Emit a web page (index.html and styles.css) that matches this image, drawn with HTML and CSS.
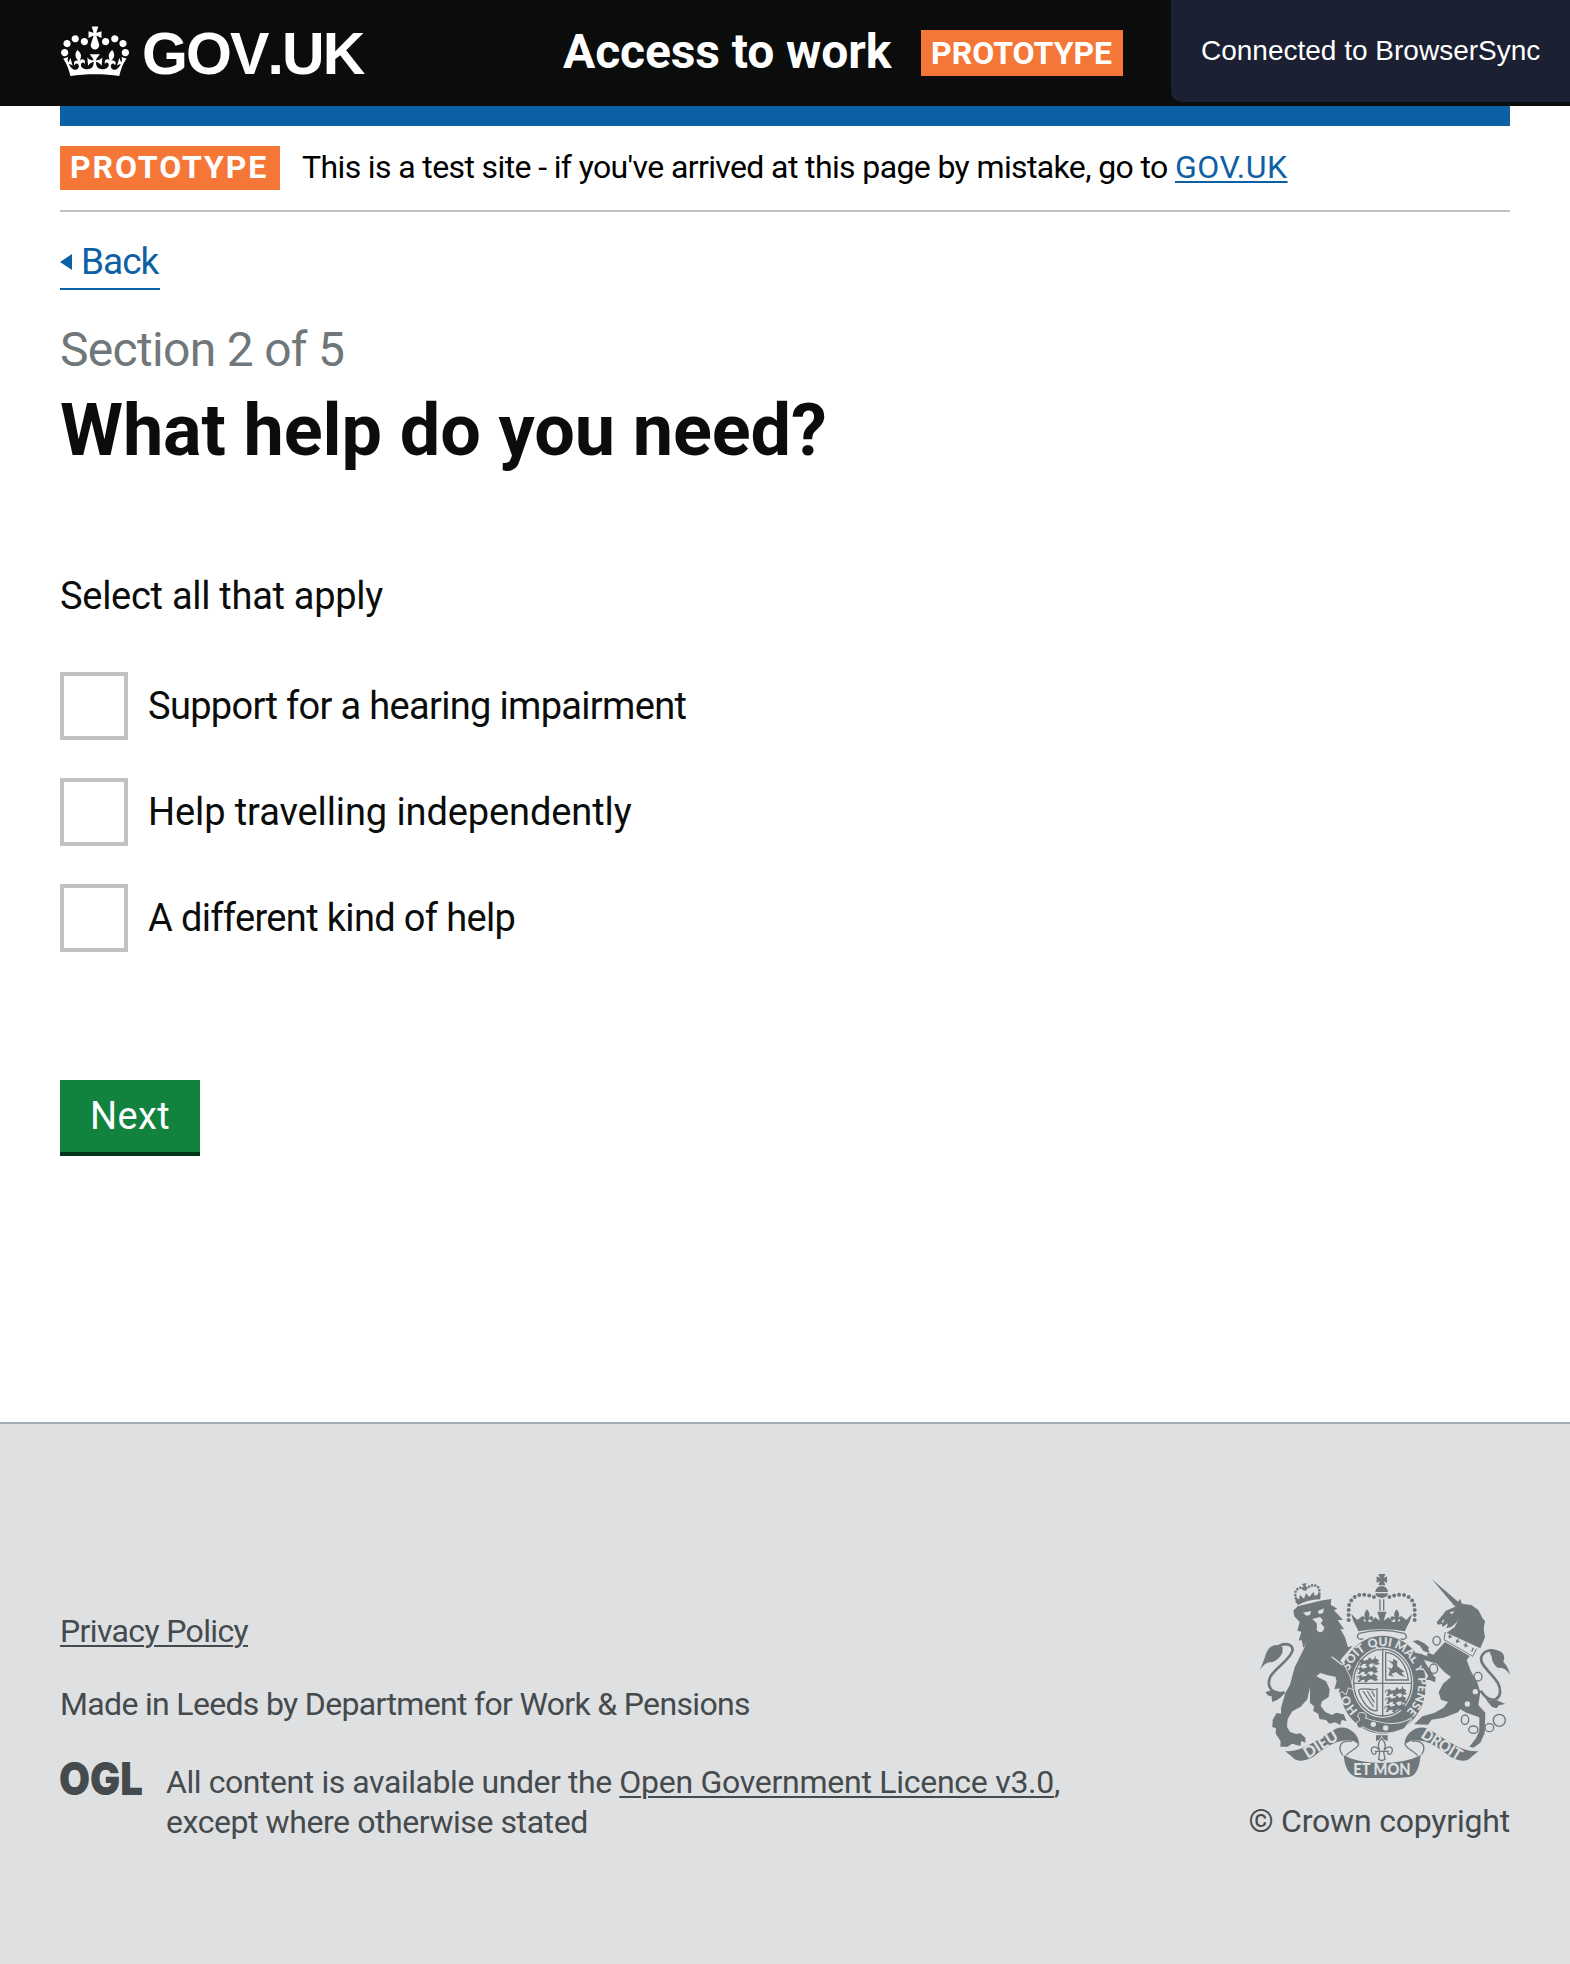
FILE: index.html
```html
<!DOCTYPE html>
<html lang="en">
<head>
<meta charset="utf-8">
<title>What help do you need?</title>
<link rel="stylesheet" href="styles.css">
</head>
<body>
<header class="header">
  <a class="logo" href="#">
    <svg class="logo-crown" viewBox="0 0 132 97" aria-hidden="true"><path fill="#fff" d="M25 30.2c3.5 1.5 7.7-.2 9.1-3.7 1.5-3.6-.2-7.8-3.9-9.2-3.6-1.4-7.6.3-9.1 3.9-1.4 3.5.3 7.5 3.9 9zM9 39.5c3.6 1.5 7.8-.2 9.2-3.7 1.5-3.6-.2-7.8-3.9-9.1-3.6-1.5-7.6.2-9.1 3.8-1.4 3.5.3 7.5 3.8 9zM4.4 57.2c3.5 1.5 7.7-.2 9.1-3.8 1.5-3.6-.2-7.7-3.9-9.1-3.5-1.5-7.6.3-9.1 3.8-1.4 3.5.3 7.6 3.9 9.1zm38.3-21.4c3.5 1.5 7.7-.2 9.1-3.8 1.5-3.6-.2-7.7-3.9-9.1-3.6-1.5-7.6.3-9.1 3.8-1.3 3.6.4 7.7 3.9 9.1zm64.4-5.6c-3.6 1.5-7.8-.2-9.1-3.7-1.5-3.6.2-7.8 3.8-9.2 3.6-1.4 7.7.3 9.2 3.9 1.3 3.5-.4 7.5-3.9 9zm15.9 9.3c-3.6 1.5-7.7-.2-9.1-3.7-1.5-3.6.2-7.8 3.7-9.1 3.6-1.5 7.7.2 9.2 3.8 1.5 3.5-.3 7.5-3.8 9zm4.7 17.7c-3.6 1.5-7.8-.2-9.2-3.8-1.5-3.6.2-7.7 3.9-9.1 3.6-1.5 7.7.3 9.2 3.8 1.3 3.5-.4 7.6-3.9 9.1zM89.3 35.8c-3.6 1.5-7.8-.2-9.2-3.8-1.4-3.6.2-7.7 3.9-9.1 3.6-1.5 7.7.3 9.2 3.8 1.4 3.6-.3 7.7-3.9 9.1zM69.7 17.7l8.9 4.7V9.3l-8.9 2.8c-.2-.3-.5-.6-.9-.9L72.4 0H59.6l3.5 11.2c-.3.3-.6.5-.9.9l-8.8-2.8v13.1l8.8-4.7c.3.3.6.7.9.9l-5 15.4v.1c-.2.8-.4 1.6-.4 2.4 0 4.1 3.1 7.5 7 8.1h.2c.3 0 .7.1 1 .1.4 0 .7 0 1-.1h.2c4-.6 7.1-4.1 7.1-8.1 0-.8-.1-1.7-.4-2.4V34l-5.1-15.4c.4-.2.7-.6 1-.9zM66 92.8c16.9 0 32.8 1.1 47.1 3.2 4-16.9 8.9-26.7 14-33.5l-9.6-3.4c1 4.9 1.1 7.2 0 10.2-1.5-1.4-3-4.3-4.2-8.7L108.6 76c2.8-2 5-3.2 7.5-3.3-4.4 9.4-10 11.9-13.6 11.2-4.3-.8-6.3-4.6-5.6-7.9 1-4.7 5.7-5.9 8-.5 4.3-8.7-3-11.4-7.6-8.8 7.1-7.2 7.9-13.5 2.1-21.1-8 6.1-8.1 12.3-4.5 20.8-4.7-5.4-12.1-2.5-9.5 6.2 3.4-5.2 7.9-2 7.2 3.1-.6 4.3-6.4 7.8-13.5 7.2-10.3-.9-10.9-8-11.2-13.8 2.5-.5 7.1 1.8 11 7.3L80.2 60c-4.1 4.4-8 5.3-12.3 5.4 1.4-4.4 8-11.6 8-11.6H55.5s6.4 7.2 7.9 11.6c-4.2-.1-8-1-12.3-5.4l1.4 16.4c3.9-5.5 8.5-7.7 10.9-7.3-.3 5.8-.9 12.8-11.1 13.8-7.2.6-12.9-2.9-13.5-7.2-.7-5 3.8-8.3 7.1-3.1 2.7-8.7-4.6-11.6-9.4-6.2 3.7-8.5 3.6-14.7-4.6-20.8-5.8 7.6-5 13.9 2.2 21.1-4.7-2.6-11.9.1-7.7 8.8 2.3-5.5 7.1-4.2 8.1.5.7 3.3-1.3 7.1-5.7 7.9-3.5.7-9-1.8-13.5-11.2 2.5.1 4.7 1.3 7.5 3.3l-4.7-15.4c-1.2 4.4-2.7 7.2-4.3 8.7-1.1-3-.9-5.3 0-10.2l-9.5 3.4c5 6.9 9.9 16.7 14 33.5 14.8-2.1 30.8-3.2 47.7-3.2z"/></svg>
    <span class="logo-text">GOV.UK</span>
  </a>
  <span class="service-name">Access to work</span>
  <strong class="tag">PROTOTYPE</strong>
</header>
<div class="sync-notice">Connected to BrowserSync</div>

<main class="container">
  <div class="phase-banner">
    <strong class="phase-tag">PROTOTYPE</strong>
    <span class="phase-text">This is a test site - if you've arrived at this page by mistake, go to <a class="phase-link" href="#">GOV.UK</a></span>
  </div>
  <a class="back" href="#"><span class="back-arrow"></span>Back</a>
  <div class="caption">Section 2 of 5</div>
  <h1 class="title">What help do you need?</h1>
  <form>
    <p class="hint">Select all that apply</p>
    <div class="options">
      <label class="option"><input class="box" type="checkbox"><span class="label label-hearing">Support for a hearing impairment</span></label>
      <label class="option"><input class="box" type="checkbox"><span class="label label-travel">Help travelling independently</span></label>
      <label class="option"><input class="box" type="checkbox"><span class="label label-other">A different kind of help</span></label>
    </div>
    <button class="next" type="button">Next</button>
  </form>
</main>

<footer class="footer">
  <div class="footer-main">
    <p class="privacy"><a href="#">Privacy Policy</a></p>
    <p class="made">Made in Leeds by Department for Work &amp; Pensions</p>
    <div class="licence">
      <svg class="ogl" viewBox="0 0 82 34" role="img" aria-label="Open Government Licence"><text x="-1" y="33" textLength="84" lengthAdjust="spacingAndGlyphs">OGL</text></svg>
      <p class="licence-text"><span class="licence-line">All content is available under the <a class="licence-link" href="#">Open Government Licence v3.0</a>,</span><br><span class="licence-rest">except where otherwise stated</span></p>
    </div>
  </div>
  <div class="copyright">
    <svg class="arms" viewBox="90 42 750 612" aria-hidden="true">
      <defs>
        <path id="garter" d="M458 482A107 110 0 0 1 351 373A107 115 0 0 1 565 373A107 110 0 0 1 458 482"/>
        <g id="fleur"><path d="M0-22C-10-10-9-3-3 6C-10-5-21-3-18 9C-15 14-10 12-10 8L-4 9L-5 18H5L4 9L10 8C10 12 15 14 18 9C21-3 10-5 3 6C9-3 10-10 0-22Z"/></g>
        <g id="lions"><path d="M0 3L8-3L13 3L24 0L31-7L36 0L48-4L58 2L54 8L61 13L49 16L40 11L30 13L25 20L17 19L20 12L10 13L4 20L-3 17L4 11Z"/><path class="thin" d="M5 3C-5-2-8 6-2 10M30 4L28-6M44 4L47-10"/></g>
      </defs>
      <!-- royal crown -->
      <path d="M445 42H466L461 54L471 49V69L461 63L466 76H445L450 63L440 69V49L450 54Z"/>
      <path d="M436 96C438 84 445 79 455 79S472 84 474 96ZM436 100H474C472 110 464 114 455 114S438 110 436 100Z"/>
      <path class="dots" d="M356 180V140C364 105 394 94 440 114M554 180V140C546 105 516 94 470 114"/>
      <path class="mid" d="M450 118V152M461 118V152"/>
      <path d="M364 162L382 180L394 170L404 185L424 186L435 172L450 182L442 155H469L461 182L476 172L487 186L507 185L517 170L529 180L546 162C541 188 530 198 525 214C485 206 425 206 385 214C380 198 369 188 364 162Z"/>
      <use href="#fleur" x="411" y="170"/><use href="#fleur" x="500" y="170"/>
      <path class="mid" d="M388 220C374 232 388 241 400 236M522 220C538 232 524 241 512 236M388 220C430 209 480 209 522 220"/>
      <!-- garter and shield -->
      <ellipse cx="458" cy="374" rx="130" ry="147"/>
      <ellipse class="bg" cx="458" cy="368" rx="92" ry="106"/>
      <ellipse class="mid" cx="458" cy="368" rx="87" ry="100"/>
      <path class="mid" d="M458 266V470M370 370H546"/>
      <use href="#lions" x="389" y="299"/><use href="#lions" x="385" y="323"/><use href="#lions" x="385" y="347"/>
      <use href="#lions" x="471" y="389"/><use href="#lions" x="471" y="413"/><use href="#lions" x="469" y="437"/>
      <path class="mid" d="M467 277C505 280 530 315 535 360H467Z"/>
      <path d="M474 300L488 306L490 296L502 304L501 318L524 335L514 338L526 352L510 346L498 336L484 342L492 350L475 346L480 331L472 322L485 326L490 316Z"/>
      <path class="mid" d="M385 390C400 380 430 394 441 387V452C420 455 397 430 385 390M399 393L431 441M412 393L433 427M425 393L434 410"/>
      <g class="motto">
        <text><textPath href="#garter" startOffset="16%">HO</textPath></text>
        <text><textPath href="#garter" startOffset="36.5%">SOIT</textPath></text>
        <text><textPath href="#garter" startOffset="48.8%">QUI</textPath></text>
        <text><textPath href="#garter" startOffset="60.5%">MAL</textPath></text>
        <text><textPath href="#garter" startOffset="69%">Y</textPath></text>
        <text><textPath href="#garter" startOffset="80.5%">PENSE</textPath></text>
      </g>
      <path class="cut" d="M388 460C405 455 413 467 404 475C460 495 510 500 545 474L522 505C475 526 430 518 398 498C390 510 376 496 383 486C392 485 392 472 384 469Z"/>
      <g class="bg"><circle cx="430" cy="493" r="8"/><circle cx="467" cy="504" r="8"/></g>
      <!-- lion -->
      <path class="cut" d="M190 152L203 139L278 121L304 117L302 134L322 146L312 151L339 180L323 180L342 208L331 207L345 232L354 262L368 257L346 283L331 301L345 322L360 352L368 387L354 382L348 402L336 394L326 398L329 385L313 388L320 364L316 350L293 346L271 339L259 349L288 364L299 388L296 411L276 424L272 438L286 456L306 465L318 458L341 463L350 484L335 479L331 495L315 487L298 491L288 480L268 477L265 462L250 453L252 439L240 429V382L232 418L212 440L187 454L173 477L171 500L180 516L198 522L211 520L226 533V548L214 543L211 558L186 551L173 560H151L152 544L137 521L138 505L127 501L128 480L140 459L153 461V444L166 399L180 374L194 322L218 274L231 244L220 264L215 240L206 242L214 215L202 212L209 186L193 169Z"/>
      <path class="bg" d="M219 158L243 153L240 165L229 167ZM263 154L282 145L279 159L267 162ZM247 177L270 171L279 181L272 190L283 202Q281 218 269 217Q257 213 261 202L260 190Z"/>
      <path class="thin-bg" d="M305 290L337 315"/>
      <path class="dots small" d="M200 125L195 102C198 84 212 78 225 88M268 111L268 87C260 72 242 73 232 85"/>
      <path d="M194 112L207 118L210 105L222 116L228 100L238 111L250 96L255 108L271 99L270 118Q230 119 203 136ZM216 72L230 69L226 78L234 83L228 92L219 91L214 84L221 80Z"/>
      <path class="tail" d="M164 397C130 408 107 382 121 350C138 321 181 300 188 270C187 252 165 247 145 259"/>
      <path d="M158 262C135 244 112 261 105 291L90 331Q105 303 126 307Q147 299 157 279ZM128 389L107 396Q113 410 125 409L126 426Q140 424 153 412L164 400Z"/>
      <!-- unicorn -->
      <path d="M605 57L686 127L674 139Z"/>
      <path d="M620 187L637 166L648 152L674 141L690 116L696 131L724 135L745 150L757 174L765 183L761 206L765 232L751 265L650 218L674 201L688 172Q679 193 661 202L649 205L654 190L638 201L635 192L624 194Z"/>
      <path class="bg" d="M658 157L674 154L666 163ZM635 184L644 178L638 190Z"/>
      <path class="thin" d="M646 216L642 239L728 289L740 266"/>
      <path class="mid" d="M658 235L660 223M655 228L666 231M680 249L684 237M678 242L689 245M705 262L709 248M701 255L714 258M725 275L730 263"/>
      <path class="cut" d="M645 246L631 261L610 284L580 272L570 258L548 244L563 240L583 250L603 268L590 285L618 309L643 336L663 351L639 371L626 397L633 419L654 426L641 443L612 459L577 469L552 493L594 494L605 479L641 473L684 457L703 431L690 447L709 458L748 472V512L738 535L718 560L730 563L751 548L764 520L766 458L745 435L751 396L741 365L722 332L710 300L719 288Z"/>
      <path class="leg" d="M620 304L570 289L581 314L605 350"/>
      <path d="M599 341L617 352L615 367L599 360L588 359ZM548 280L578 282L575 295L557 292Z"/>
      <path class="tail" d="M752 392C788 446 827 410 803 368C783 335 736 307 760 281Q770 269 790 271"/>
      <path d="M776 269C820 266 828 288 820 306Q835 320 840 344Q823 318 804 324Q786 310 785 290ZM760 404L779 423L801 421L826 432L807 436L799 445L785 440L772 424Z"/>
      <g class="chain">
        <ellipse cx="620" cy="242" rx="11" ry="13"/><ellipse cx="611" cy="326" rx="12" ry="14"/><ellipse cx="744" cy="350" rx="12" ry="13"/><ellipse cx="705" cy="479" rx="11" ry="14"/><ellipse cx="730" cy="509" rx="14" ry="11"/><ellipse cx="778" cy="503" rx="13" ry="12"/><circle cx="808" cy="481" r="18"/>
      </g>
      <g class="bg"><circle cx="602" cy="268" r="7"/><circle cx="736" cy="395" r="8"/><circle cx="712" cy="432" r="8"/><circle cx="744" cy="350" r="8"/></g>
      <!-- ribbons -->
      <path class="cut" d="M165 573C220 579 270 530 318 506C350 493 388 520 387 553L370 543C326 532 281 566 250 590C220 607 198 605 188 592Z"/>
      <path class="cut" d="M746 573C690 579 641 530 593 506C561 493 523 520 524 553L541 543C585 532 630 566 661 590C691 607 713 605 723 592Z"/>
      <path class="ribbon" d="M365 544C325 540 321 568 343 590M386 550C388 566 352 573 347 590M546 544C586 540 590 568 569 590M525 550C523 566 559 573 564 590"/>
      <path class="cut" d="M341 585C390 617 520 617 572 585C568 628 556 646 540 650C490 657 410 657 375 650C350 640 343 610 341 585Z"/>
      <g class="motto big">
        <text transform="translate(281 567) rotate(-32)" textLength="112" lengthAdjust="spacingAndGlyphs">DIEU</text>
        <text transform="translate(627 567) rotate(32)" textLength="134" lengthAdjust="spacingAndGlyphs">DROIT</text>
        <text x="456" y="645" textLength="172" lengthAdjust="spacingAndGlyphs">ET MON</text>
      </g>
      <path d="M438 526H473V544L461 538L455 528L449 538L438 544Z"/>
      <path class="ribbon" d="M455 535C440 552 445 562 449 571C432 549 415 567 429 582C436 585 440 580 437 574H474C471 580 475 585 482 582C496 567 479 549 462 571C466 562 471 552 455 535M449 576L446 598L455 602L465 598L461 576"/>
    </svg>
    <p class="copyright-text">© Crown copyright</p>
  </div>
</footer>
</body>
</html>
```
FILE: styles.css
```css
* { box-sizing: border-box; }
body { margin: 0; background: #fff; color: #0b0c0c; font-family: Roboto, "Noto Sans", sans-serif; }
p, h1 { margin: 0; font-weight: 400; }

.header { display: flex; align-items: flex-start; height: 106px; padding-left: 60px; background: #0b0c0c; color: #fff; white-space: nowrap; }
.logo { display: flex; width: 503px; padding-left: 1px; color: #fff; text-decoration: none; }
.logo-crown { width: 68px; height: 51px; margin-top: 26px; }
.logo-text { margin-left: 13px; font-family: "Liberation Sans", Arial, sans-serif; font-size: 59px; font-weight: 700; font-kerning: none; line-height: 108px; letter-spacing: -1.9px; }
.service-name { width: 358px; font-size: 48px; font-weight: 700; line-height: 103px; letter-spacing: -.1px; }
.tag { height: 46px; width: 202px; margin-top: 30px; padding-left: 10px; background: #f47738; font-size: 32px; line-height: 46px; letter-spacing: 0; }

.sync-notice { position: fixed; top: 0; right: 0; width: 399px; height: 102px; padding: 0 30px; border-bottom-left-radius: 10px; background: #1b2032; color: #fff; font: 28px/101px "Liberation Sans", Arial, sans-serif; white-space: nowrap; }

.container { padding: 0 60px; height: 1316px; }
.phase-banner { display: flex; height: 106px; padding-top: 20px; border-top: 20px solid #0e60a4; border-bottom: 2px solid #bfc1c3; color: #000; font-size: 32px; line-height: 42px; white-space: nowrap; }
.phase-tag { width: 220px; height: 44px; padding-left: 10px; margin-right: 22px; background: #f47738; color: #fff; letter-spacing: 1.9px; }
.phase-text { letter-spacing: -.62px; }
.phase-link { letter-spacing: .5px; }
a { color: #0e60a4; text-decoration-thickness: 2px; text-underline-offset: 3px; }
.back { display: flex; align-items: flex-start; width: 100px; height: 48px; margin-top: 30px; border-bottom: 2px solid; font-size: 37px; line-height: 40px; letter-spacing: -1px; text-decoration: none; }
.back-arrow { width: 12px; margin: 12px 9px 0 0; border: solid transparent; border-width: 8px 12px 8px 0; border-right-color: #0e60a4; }
.caption { margin-top: 30px; color: #6f777b; font-size: 48px; line-height: 60px; letter-spacing: -.7px; }
.title { margin-top: 11px; font-size: 72px; font-weight: 700; line-height: 80px; letter-spacing: -.1px; }
.hint { margin-top: 100px; font-size: 38px; line-height: 50px; letter-spacing: -.28px; }
.options { display: flex; flex-direction: column; gap: 38px; margin-top: 51px; }
.option { display: flex; gap: 20px; height: 68px; }
.box { appearance: none; width: 68px; height: 68px; margin: 0; border: 4px solid #bfc1c3; background: #fff; }
.label { font-size: 38px; line-height: 68px; }
.label-hearing { letter-spacing: -.68px; }
.label-travel { letter-spacing: -.1px; }
.label-other { letter-spacing: -.65px; }
.next { width: 140px; height: 76px; margin: 128px 0 0; padding: 0; border: 0; border-bottom: 4px solid #003618; background: #12823f; color: #fff; font: 38px/72px Roboto, sans-serif; letter-spacing: .4px; }

.footer { display: flex; justify-content: space-between; height: 542px; padding: 0 60px; border-top: 2px solid #a1acb2; background: #dee0e2; color: #454a4c; font-size: 32px; line-height: 40px; }
.footer a { color: inherit; }
.footer-main { padding-top: 187px; }
.privacy { letter-spacing: -.64px; }
.made { margin-top: 33px; letter-spacing: -.67px; }
.licence { display: flex; gap: 24px; margin-top: 38px; }
.ogl { width: 82px; height: 34px; overflow: visible; fill: #454a4c; font: 900 45px Inter, sans-serif; }
.licence-line { letter-spacing: -.43px; }
.licence-link { letter-spacing: -.27px; }
.licence-rest { letter-spacing: -.43px; }
.copyright { width: 262px; padding-top: 150px; text-align: right; }
.copyright-text { margin-top: 23px; letter-spacing: -.2px; white-space: nowrap; }

.arms { display: block; width: 250px; height: 204px; margin-left: auto; fill: #6f777b; }
.arms .bg { fill: #dee0e2; }
.arms .cut { stroke: #dee0e2; stroke-width: 5; paint-order: stroke; }
.arms .thin, .arms .mid, .arms .dots, .arms .tail, .arms .leg, .arms .ribbon, .arms .chain { fill: none; stroke: #6f777b; stroke-width: 3; }
.arms .mid, .arms .ribbon { stroke-width: 4; }
.arms .chain { stroke-width: 4; }
.arms .tail { stroke-width: 8; }
.arms .leg { stroke-width: 14; }
.arms .thin-bg { fill: none; stroke: #dee0e2; stroke-width: 4; }
.arms .dots { stroke-width: 12; stroke-linecap: round; stroke-dasharray: 0 15; }
.arms .small { stroke-width: 8; stroke-dasharray: 0 10; }
.motto { fill: #dee0e2; font: 900 36px Lato, sans-serif; text-anchor: middle; }
.big { font-size: 48px; }
```
